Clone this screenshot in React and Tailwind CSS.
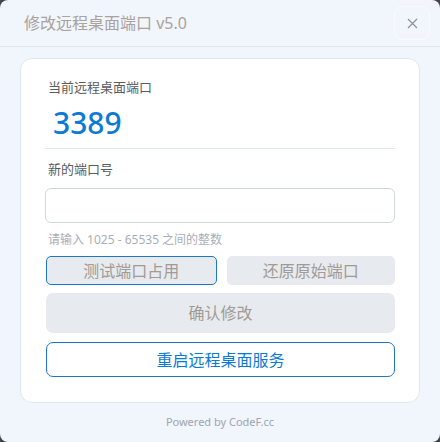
import React from "react";

const FONT = { fontFamily: '"Noto Sans", "Noto Sans CJK SC", sans-serif' };

export default function App() {
  return (
    <div className="w-[440px] h-[442px] bg-[#41464b]" style={FONT}>
      <div className="w-full h-full rounded-[8px] bg-[#f1f5fc] flex flex-col overflow-hidden">
        {/* title bar */}
        <div className="h-[47px] shrink-0 flex items-center justify-between border-b border-[#dfe4ec] pl-[24px] pr-[10px]">
          <div className="text-[16px] text-[#aaa29c] leading-none">修改远程桌面端口 v5.0</div>
          <button className="w-[36px] h-[34px] rounded-[8px] border border-[#f9fafc] flex items-center justify-center text-[#8c929c]">
            <svg width="11" height="11" viewBox="0 0 11 11" fill="none" stroke="currentColor" strokeWidth="1.2">
              <path d="M1 1L10 10M10 1L1 10" />
            </svg>
          </button>
        </div>

        {/* card */}
        <div className="mx-[20px] mt-[11px] h-[345px] rounded-[12px] bg-white border border-[#e0e6f0] px-[24px] pt-[19px] flex flex-col">
          <div className="text-[13px] leading-[18px] text-[#5b5b5b] pl-[3px]">当前远程桌面端口</div>
          <div className="text-[30px] leading-[36px] font-medium text-[#0b7ad5] pl-[8px] mt-[9px]">3389</div>
          <div className="h-px bg-[#e2e7ef] mt-[7px]" />
          <div className="text-[13px] leading-[18px] text-[#5b5b5b] pl-[3px] mt-[11px]">新的端口号</div>
          <div className="mt-[10px] h-[35px] rounded-[6px] border border-[#d1d6de] bg-white" />
          <div className="text-[12px] leading-[16px] text-[#a8aeb9] pl-[3px] mt-[9px]">请输入 1025 - 65535 之间的整数</div>
          <div className="mt-[8px] flex gap-[10px] pl-[1px]">
            <button className="flex-1 h-[29px] rounded-[5px] bg-[#e7eaee] border border-[#1f76c8] text-[16px] text-[#a19b96] flex items-center justify-center">
              测试端口占用
            </button>
            <button className="flex-1 h-[29px] rounded-[5px] bg-[#e7eaee] text-[16px] text-[#a19b96] flex items-center justify-center">
              还原原始端口
            </button>
          </div>
          <button className="mt-[8px] ml-[1px] h-[40px] rounded-[7px] bg-[#e7eaee] text-[16px] text-[#a19b96] flex items-center justify-center">
            确认修改
          </button>
          <button className="mt-[9px] ml-[1px] h-[35px] rounded-[7px] bg-white border border-[#1f76c8] text-[16px] text-[#0b7ad5] flex items-center justify-center">
            重启远程桌面服务
          </button>
        </div>

        {/* footer */}
        <div className="flex-1 flex items-center justify-center text-[11px] text-[#9ea4b1]">Powered by CodeF.cc</div>
      </div>
    </div>
  );
}
